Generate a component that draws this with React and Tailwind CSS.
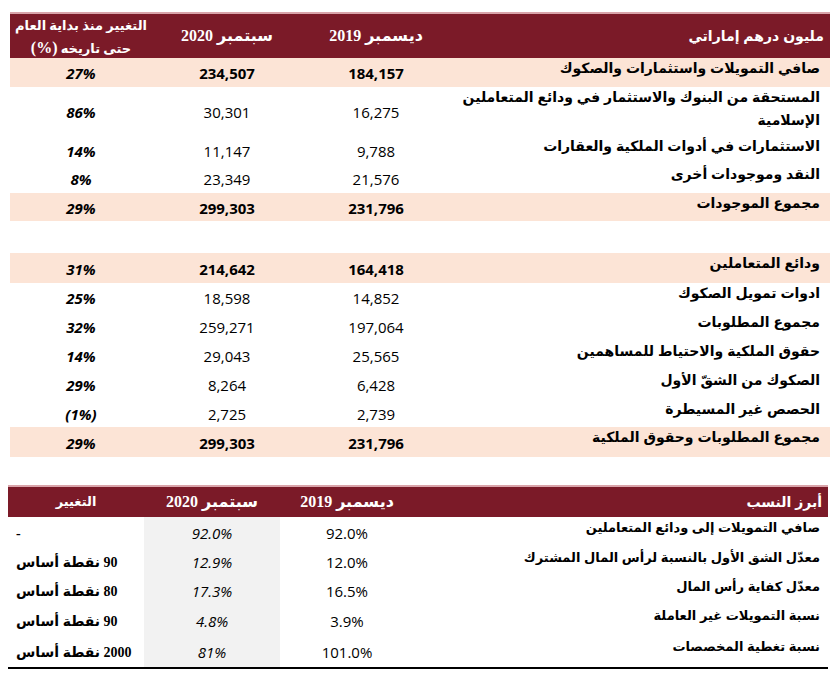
import React from 'react';

const sans = "font-['Liberation_Sans','DejaVu_Sans',sans-serif]";
const num = "font-['Open_Sans','Lato',sans-serif]";
const serif = "font-['Liberation_Serif','DejaVu_Sans',serif]";

const balance = [
  { label: ['صافي التمويلات واستثمارات والصكوك'], dec: '184,157', sep: '234,507', chg: '27%', hl: true, h: 'h-[29px]' },
  { label: ['المستحقة من البنوك والاستثمار في ودائع المتعاملين', 'الإسلامية'], dec: '16,275', sep: '30,301', chg: '86%', h: 'h-[49px]' },
  { label: ['الاستثمارات في أدوات الملكية والعقارات'], dec: '9,788', sep: '11,147', chg: '14%', h: 'h-[28px]' },
  { label: ['النقد وموجودات أخرى'], dec: '21,576', sep: '23,349', chg: '8%', h: 'h-[29px]' },
  { label: ['مجموع الموجودات'], dec: '231,796', sep: '299,303', chg: '29%', hl: true, h: 'h-[28px]' },
  { spacer: true },
  { label: ['ودائع المتعاملين'], dec: '164,418', sep: '214,642', chg: '31%', hl: true, h: 'h-[30px]' },
  { label: ['ادوات تمويل الصكوك'], dec: '14,852', sep: '18,598', chg: '25%', h: 'h-[29px]' },
  { label: ['مجموع المطلوبات'], dec: '197,064', sep: '259,271', chg: '32%', h: 'h-[29px]' },
  { label: ['حقوق الملكية والاحتياط للمساهمين'], dec: '25,565', sep: '29,043', chg: '14%', h: 'h-[29px]' },
  { label: ['الصكوك من الشقّ الأول'], dec: '6,428', sep: '8,264', chg: '29%', h: 'h-[29px]' },
  { label: ['الحصص غير المسيطرة'], dec: '2,739', sep: '2,725', chg: '(1%)', h: 'h-[28px]' },
  { label: ['مجموع المطلوبات وحقوق الملكية'], dec: '231,796', sep: '299,303', chg: '29%', hl: true, h: 'h-[30px]' },
];

const ratios = [
  { label: 'صافي التمويلات إلى ودائع المتعاملين', dec: '92.0%', sep: '92.0%', chg: '-', h: 'h-[30px]' },
  { label: 'معدّل الشق الأول بالنسبة لرأس المال المشترك', dec: '12.0%', sep: '12.9%', chg: '90 نقطة أساس', h: 'h-[29px]' },
  { label: 'معدّل كفاية رأس المال', dec: '16.5%', sep: '17.3%', chg: '80 نقطة أساس', h: 'h-[29px]' },
  { label: 'نسبة  التمويلات غير العاملة', dec: '3.9%', sep: '4.8%', chg: '90 نقطة أساس', h: 'h-[31px]' },
  { label: 'نسبة تغطية المخصصات', dec: '101.0%', sep: '81%', chg: '2000 نقطة أساس', h: 'h-[31px]' },
];

function BalanceTable() {
  return (
    <div dir="rtl" className="ml-[10px] mt-[12px] w-[820px]">
      <div className="grid h-[46px] grid-cols-[380px_148px_150px_142px] grid-rows-[44px] border-t-2 border-[#d9a4aa] bg-[#7b1a28] text-white">
        <div className={`flex items-center pr-[6px] text-[14px] font-bold ${sans}`}>مليون درهم إماراتي</div>
        <div className={`flex items-center justify-center text-[16px] font-bold ${serif}`}>ديسمبر 2019</div>
        <div className={`flex items-center justify-center text-[16px] font-bold ${serif}`}>سبتمبر 2020</div>
        <div className={`flex flex-col items-center justify-start whitespace-nowrap pt-[1px] text-[13px] font-bold leading-[22px] ${serif}`}>
          <span>التغيير منذ بداية العام</span>
          <span>حتى تاريخه <span className="text-[16px]">(%)</span></span>
        </div>
      </div>
      {balance.map((r, i) =>
        r.spacer ? (
          <div key={i} className="h-[32px]" />
        ) : (
          <div
            key={i}
            className={`grid grid-cols-[380px_148px_150px_142px] ${r.h} ${r.hl ? 'bg-[#fce4d6]' : ''}`}
          >
            <div className={`whitespace-nowrap pr-[10px] text-[14px] font-bold leading-[21px] text-black ${sans}`}>
              {r.label.map((l, j) => (
                <div key={j} className={j > 0 ? 'mt-[2px]' : ''}>{l}</div>
              ))}
            </div>
            <div dir="ltr" className={`flex items-center justify-center pt-[2px] text-[15px] text-black ${num} ${r.hl ? 'font-bold' : ''}`}>{r.dec}</div>
            <div dir="ltr" className={`flex items-center justify-center pt-[2px] text-[15px] text-black ${num} ${r.hl ? 'font-bold' : ''}`}>{r.sep}</div>
            <div dir="ltr" className={`flex items-center justify-center pt-[2px] text-[15px] font-bold italic text-black ${num}`}>{r.chg}</div>
          </div>
        )
      )}
    </div>
  );
}

function RatiosTable() {
  return (
    <div dir="rtl" className="ml-[8px] mt-[28px] w-[820px] border-b-2 border-black">
      <div className="grid h-[32px] grid-cols-[414px_134px_136px_136px] grid-rows-[30px] border-t-2 border-[#d9a4aa] bg-[#7b1a28] text-white">
        <div className={`flex items-center pr-[6px] text-[14px] font-bold ${sans}`}>أبرز النسب</div>
        <div className={`flex items-center justify-center text-[16px] font-bold ${serif}`}>ديسمبر 2019</div>
        <div className={`flex items-center justify-center text-[16px] font-bold ${serif}`}>سبتمبر 2020</div>
        <div className={`flex items-center justify-center text-[13px] font-bold ${serif}`}>التغيير</div>
      </div>
      {ratios.map((r, i) => (
        <div key={i} className={`grid grid-cols-[414px_134px_136px_136px] ${r.h}`}>
          <div className={`whitespace-nowrap pr-[8px] text-[13px] font-bold leading-[22px] text-black ${sans}`}>{r.label}</div>
          <div dir="ltr" className={`flex items-center justify-center pt-[2px] text-[15px] text-black ${num}`}>{r.dec}</div>
          <div dir="ltr" className={`flex items-center justify-center bg-[#f2f2f2] pt-[2px] text-[15px] italic text-black ${num}`}>{r.sep}</div>
          <div className={`flex items-center justify-end whitespace-nowrap pl-[8px] pt-[2px] text-[14px] font-bold text-black ${serif}`}>{r.chg}</div>
        </div>
      ))}
    </div>
  );
}

export default function App() {
  return (
    <div className="h-[682px] w-[838px] overflow-hidden bg-white">
      <BalanceTable />
      <RatiosTable />
    </div>
  );
}
